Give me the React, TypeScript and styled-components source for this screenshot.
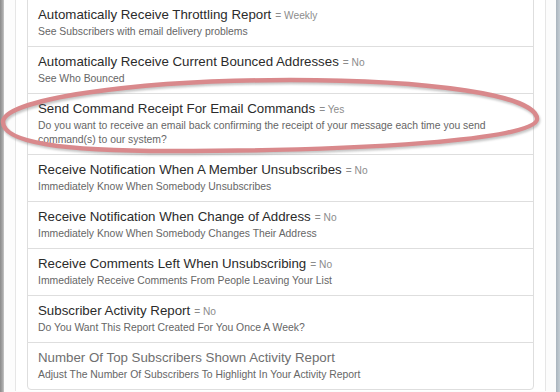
import React from "react";
import styled, { createGlobalStyle } from "styled-components";

const GlobalStyle = createGlobalStyle`
	html, body {
		margin: 0;
		padding: 0;
		background: #fff;
		overflow: hidden;
	}
`;

const Window = styled.div`
	position: relative;
	display: flex;
	width: 560px;
	height: 392px;
	overflow: hidden;
	background: #fff;
	font-family: "Liberation Sans", Arial, sans-serif;
`;

const LeftEdge = styled.div`
	flex: 0 0 4px;
	background: linear-gradient(to right, #8a8a8a, #a6a6a6 60%, #c8c8c8);
`;

const RightEdge = styled.div`
	flex: 0 0 4px;
	background: linear-gradient(to right, #a9b4bd, #c4cdd4);
`;

const Content = styled.div`
	flex: 1;
	padding: 0 10px 0 11px;
	background: #fcfcfc;
`;

const Panel = styled.div`
	height: 100%;
	box-sizing: border-box;
	padding: 0 11px;
	background: #fff;
	border-left: 1px solid #e6e6e6;
	border-right: 1px solid #e6e6e6;
`;

const ListGroup = styled.div`
	margin-top: -1px;
	display: flex;
	flex-direction: column;
`;

const Item = styled.div`
	padding: 7px 10px;
	margin-bottom: -1px;
	border: 1px solid #dedede;
	background: #fff;

	&:last-child {
		border-radius: 0 0 4px 4px;
	}
`;

const Title = styled.div<{ $muted?: boolean }>`
	font-size: 13.3px;
	line-height: 16px;
	height: 16px;
	margin-bottom: 2px;
	color: ${(p) => (p.$muted ? "#6f6f6f" : "#2b2b2b")};
	white-space: nowrap;
`;

const Value = styled.span`
	font-size: 10.2px;
	line-height: 0;
	color: #8c8c8c;
	margin-left: 4px;
`;

const Desc = styled.div`
	font-size: 10.4px;
	line-height: 14px;
	color: #666;
`;

const Ellipse = styled.svg`
	position: absolute;
	left: 0;
	top: 0;
	pointer-events: none;
	filter: drop-shadow(1px 2px 1px rgba(90, 90, 90, 0.35));
`;

type Setting = {
	title: string;
	value?: string;
	desc: string;
	muted?: boolean;
};

const settings: Setting[] = [
	{
		title: "Automatically Receive Throttling Report",
		value: "Weekly",
		desc: "See Subscribers with email delivery problems",
	},
	{
		title: "Automatically Receive Current Bounced Addresses",
		value: "No",
		desc: "See Who Bounced",
	},
	{
		title: "Send Command Receipt For Email Commands",
		value: "Yes",
		desc: "Do you want to receive an email back confirming the receipt of your message each time you send command(s) to our system?",
	},
	{
		title: "Receive Notification When A Member Unsubscribes",
		value: "No",
		desc: "Immediately Know When Somebody Unsubscribes",
	},
	{
		title: "Receive Notification When Change of Address",
		value: "No",
		desc: "Immediately Know When Somebody Changes Their Address",
	},
	{
		title: "Receive Comments Left When Unsubscribing",
		value: "No",
		desc: "Immediately Receive Comments From People Leaving Your List",
	},
	{
		title: "Subscriber Activity Report",
		value: "No",
		desc: "Do You Want This Report Created For You Once A Week?",
	},
	{
		title: "Number Of Top Subscribers Shown Activity Report",
		desc: "Adjust The Number Of Subscribers To Highlight In Your Activity Report",
		muted: true,
	},
];

const App = () => {
	return (
		<>
			<GlobalStyle />
			<Window>
				<LeftEdge />
				<Content>
					<Panel>
						<ListGroup>
							{settings.map((s) => (
								<Item key={s.title}>
									<Title $muted={s.muted}>
										{s.title}
										{s.value && <Value>= {s.value}</Value>}
									</Title>
									<Desc>{s.desc}</Desc>
								</Item>
							))}
						</ListGroup>
					</Panel>
				</Content>
				<RightEdge />

				<Ellipse width="560" height="392" viewBox="0 0 560 392">
					<path
						d="M3,122 C3,100 130,80 290,80 C430,80 537,95 537,119 C537,140 360,151 170,151 C60,151 3,142 3,122 Z"
						fill="none"
						stroke="#d9898c"
						strokeWidth="4.5"
					/>
				</Ellipse>
			</Window>
		</>
	);
};

export default App;
